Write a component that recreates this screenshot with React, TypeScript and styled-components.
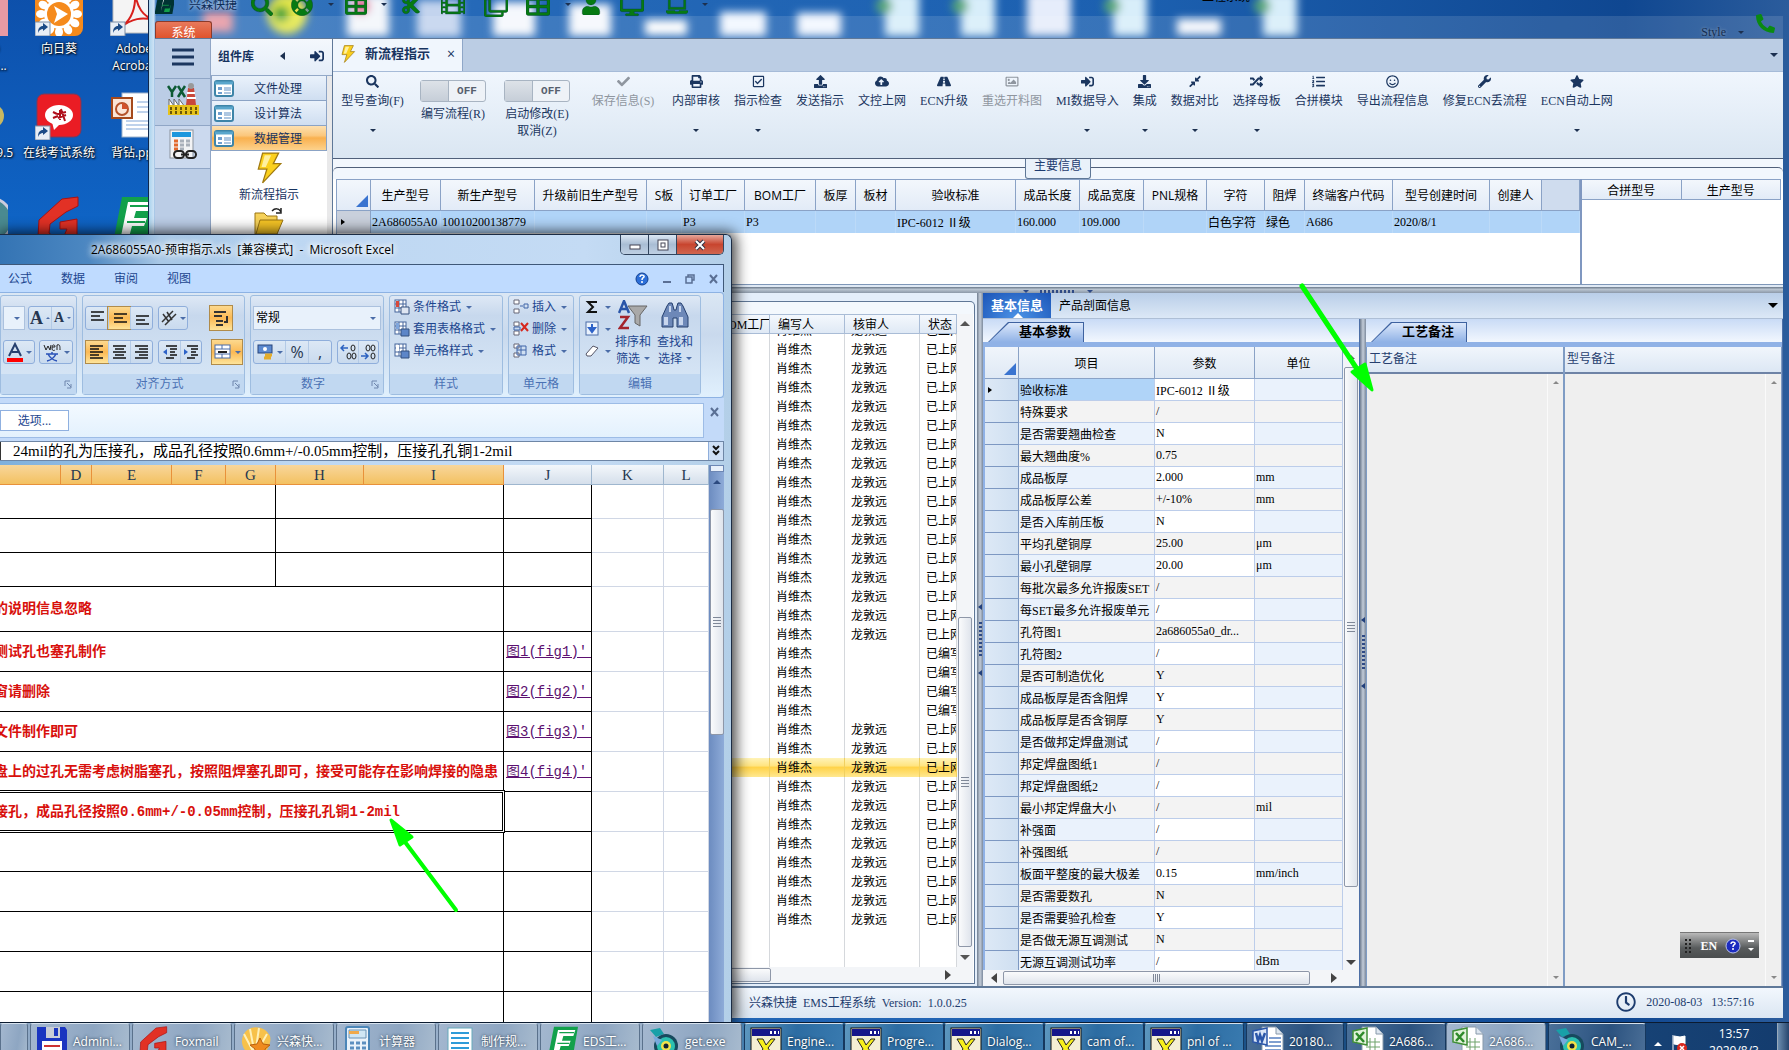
import React from 'react';
import styled, { createGlobalStyle, css } from 'styled-components';
import {
  FaSearch, FaCheck, FaPrint, FaRegCheckSquare, FaUpload, FaCloudUploadAlt, FaRoad, FaRegImage,
  FaSignInAlt, FaDownload, FaCompressAlt, FaRandom, FaListOl, FaRegSmile, FaWrench, FaStar,
  FaRegClock, FaPhoneAlt, FaCut, FaFilm, FaRegClone, FaTable, FaLifeRing, FaUser, FaDesktop, FaLaptop,
} from 'react-icons/fa';

const song = '"Liberation Serif", "Noto Sans CJK SC", serif';
const hei = '"Open Sans", "Noto Sans CJK SC", sans-serif';
const mono = '"Liberation Mono", "Noto Sans CJK SC", monospace';

const GlobalStyle = createGlobalStyle`
  * { box-sizing: border-box; }
  html, body { margin: 0; overflow: hidden; }
  body { font-family: ${song}; font-size: 12px; color: #000; }
  button, input, select, textarea { font: inherit; color: inherit; margin: 0; padding: 0; border: 0; background: none; border-radius: 0; }
  table { border-collapse: separate; border-spacing: 0; table-layout: fixed; }
  th, td { padding: 0; font-weight: normal; white-space: nowrap; overflow: hidden; }
  svg { display: block; flex: none; }
`;

/* ---------- shared pieces ---------- */
const Caret = styled.span<{ $size?: number; $dir?: 'up' | 'down' | 'left' | 'right'; $color?: string }>`
  display: block;
  flex: none;
  width: 0;
  height: 0;
  border: ${p => p.$size ?? 3}px solid transparent;
  ${p => {
    const c = p.$color ?? '#1c3050';
    const s = p.$size ?? 3;
    switch (p.$dir) {
      case 'up': return `border-bottom-color: ${c}; border-top-width: 0;`;
      case 'left': return `border-right-color: ${c}; border-right-width: ${s + 1}px; border-left-width: 0;`;
      case 'right': return `border-left-color: ${c}; border-left-width: ${s + 1}px; border-right-width: 0;`;
      default: return `border-top-color: ${c}; border-bottom-width: 0;`;
    }
  }}
`;

const VBar = styled.div`
  flex: 0 0 16px;
  display: flex;
  flex-direction: column;
  align-items: center;
  background: #f3f5f8;
`;
const VThumb = styled.div<{ $h: number; $gap: number }>`
  width: 14px;
  height: ${p => p.$h}px;
  margin-top: ${p => p.$gap}px;
  margin-bottom: auto;
  border: 1px solid #8e97a8;
  border-radius: 2px;
  background: repeating-linear-gradient(#7f8898 0 1px, transparent 1px 3px) center / 8px 10px no-repeat,
    linear-gradient(90deg, #fafbfc, #dfe4ec);
`;
const HBar = styled.div<{ $end?: number }>`
  flex: 0 0 16px;
  display: flex;
  align-items: center;
  padding: 0 ${p => p.$end ?? 8}px 0 8px;
  background: #f3f5f8;
`;
const HThumb = styled.div<{ $w: number }>`
  width: ${p => p.$w}px;
  height: 14px;
  margin: 0 auto 0 6px;
  border: 1px solid #8e97a8;
  border-radius: 2px;
  background: repeating-linear-gradient(90deg, #7f8898 0 1px, transparent 1px 2px) center / 8px 8px no-repeat,
    linear-gradient(#fafbfc, #dfe4ec);
`;
const Bar = styled.div<{ $pad: string }>`
  display: flex;
  flex: 1;
  flex-direction: column;
  align-items: center;
  padding: ${p => p.$pad};
`;

/* ---------- desktop ---------- */
const Desktop = styled.main`
  position: relative;
  height: 100vh;
  min-height: 700px;
  overflow: hidden;
  background: linear-gradient(90deg, #0f4fa8 0, #1c66bd 40%, #14509f 75%, #2a5c9c 100%);
`;
const DesktopIcons = styled.div`
  position: absolute;
  left: -53px;
  top: -62px;
  width: 230px;
  display: grid;
  grid-template-columns: 74px 76px 74px;
  grid-auto-rows: 104px;
  background: linear-gradient(#0d4ba4, #0f66c8);
`;
const DesktopIcon = styled.a`
  display: flex;
  flex-direction: column;
  align-items: center;
  padding-top: 50px;
  color: #fff;
  font: 12px/17px ${hei};
  text-align: center;
  text-decoration: none;
  text-shadow: 1px 1px 2px #000, 0 0 3px #012;
  white-space: pre;
  svg { margin-bottom: 4px; }
`;

const Shortcut = () => (
  <g>
    <rect x="0" y="34" width="15" height="14" fill="#e8eef6" stroke="#7d8ea6" />
    <path d="M3 45c0-5 2-7 5-7v-3l5 4-5 4v-2c-2 0-4 1-5 4z" fill="#1b4a86" />
  </g>
);

const SunIcon = () => (
  <svg width="48" height="48" viewBox="0 0 48 48">
    <rect width="48" height="48" rx="8" fill="#f58a1c" />
    {Array.from({ length: 12 }, (_, i) => (
      <ellipse key={i} cx="24" cy="8" rx="4" ry="5" fill="#fff" transform={`rotate(${i * 30} 24 26)`} />
    ))}
    <circle cx="24" cy="26" r="15" fill="#fff" />
    <circle cx="24" cy="26" r="12" fill="#f58a1c" />
    <path d="M19 18l14 8-14 9 3-9z" fill="#fff" />
    <Shortcut />
  </svg>
);
const AcrobatIcon = () => (
  <svg width="48" height="48" viewBox="0 0 48 48">
    <path d="M3 0h42v45H3z" fill="#f4f4f4" stroke="#bbb" />
    <path d="M10 40c12-8 16-22 15-36 2 16 8 24 19 28-12-3-22-2-34 8z" fill="none" stroke="#d8201c" strokeWidth="2" />
    <Shortcut />
  </svg>
);
const ExamIcon = () => (
  <svg width="48" height="48" viewBox="0 0 48 48">
    <rect x="2" y="2" width="44" height="43" rx="7" fill="#ea1c24" stroke="#7b3a5a" />
    <ellipse cx="24" cy="23" rx="14" ry="10" fill="#fff" />
    <path d="M17 30l2 8 6-6z" fill="#fff" />
    <path d="M18 20l4 2m-4 4l5-2m2-6v10m-3-6l9-2m-8 6l8-3m-5-6l4 12" stroke="#b0101c" strokeWidth="2" />
    <Shortcut />
  </svg>
);
const PptIcon = () => (
  <svg width="48" height="48" viewBox="0 0 48 48">
    <rect x="12" y="1" width="36" height="44" fill="#fff" stroke="#9fb4cc" />
    <path d="M27 10h18M27 15h18M27 20h18M16 29h28M16 33h28M16 37h28" stroke="#7fa5d8" />
    <rect x="2" y="6" width="20" height="20" fill="#fbe6d8" stroke="#a5491b" strokeWidth="2" />
    <circle cx="12" cy="17" r="6" fill="none" stroke="#b5532a" strokeWidth="2" />
    <path d="M12 17v-6a6 6 0 0 1 6 6z" fill="#d2512a" />
  </svg>
);
const RedG = ({ size = 48 }: { size?: number }) => (
  <svg width={size} height={size} viewBox="0 0 48 48">
    <path d="M43 1v9L31 16 15 28l-1 9 5 4 10-1 3-7h-7v-7l17-3v17l-9 8H10l-7-8 1-16L27 3z" fill="#e23125" stroke="#a11" />
  </svg>
);
const GreenF = ({ size = 48 }: { size?: number }) => (
  <svg width={size} height={size} viewBox="0 0 48 48">
    <path d="M12 1h36l-8 46H3z" fill="#12a04b" />
    <path d="M18 6h26l-3 9H26l-2 7h13l-3 8H22l-4 15h-8z" fill="#fff" />
    <path d="M20 10h22M17 26h18" stroke="#12a04b" strokeWidth="2" />
  </svg>
);

/* ---------- EMS window ---------- */
const EmsWindow = styled.section`
  position: absolute;
  left: 148px;
  right: 0;
  top: 0;
  bottom: 28px;
  display: flex;
  flex-direction: column;
  padding: 0 6px 4px;
  border-left: 1px solid #10284c;
  overflow: hidden;
  background: linear-gradient(90deg, #a9d3ee 0, #cfe3f5 5px, #3a78bd 7px, #2569b8 20%, #1c60b0 60%, #0f4791 90%, #2b5c9c 100%);
`;
const Glass = styled.header`
  position: relative;
  flex: 0 0 38px;
  overflow: hidden;
`;
const GlassBlur = styled.svg`
  position: absolute;
  inset: 0;
`;
const QuickRow = styled.div`
  position: relative;
  display: flex;
  align-items: center;
  height: 21px;
  padding-bottom: 12px;
  color: #067a12;
  svg { stroke: #033; stroke-width: 8px; }
`;
const QuickItem = styled.button<{ $w: number }>`
  flex: 0 0 ${p => p.$w}px;
  display: flex;
  justify-content: center;
`;
const Brand = styled.strong`
  flex: 0 0 68px;
  padding-left: 15px;
  color: #0d2c58;
  font: 12px/16px ${hei};
  white-space: nowrap;
  text-shadow: 0 0 4px #fff;
`;
const AppTitle = styled.span`
  margin: -17px auto 0 492px;
  color: #000;
  font-size: 12px;
`;
const SystemRow = styled.div`
  position: relative;
  display: flex;
  justify-content: space-between;
  height: 17px;
`;
const SystemTab = styled.button`
  width: 57px;
  height: 17px;
  padding-top: 3px;
  overflow: hidden;
  border: 1px solid #8c3a2a;
  border-bottom: 0;
  border-radius: 3px 3px 0 0;
  background: linear-gradient(#e8795c, #e0532c);
  color: #fff;
  line-height: 17px;
`;
const StyleBox = styled.div`
  display: flex;
  align-items: center;
  gap: 12px;
  padding-top: 5px;
  color: #132c50;
  text-shadow: 0 0 3px #9ab;
`;
const Phone = styled.span`
  margin: -18px 8px 0 0;
  color: #0a8a12;
`;
const Body = styled.div`
  flex: 1;
  display: flex;
  min-height: 0;
  border-top: 1px solid #5f7898;
  background: #eef4fb;
`;
const Rail = styled.nav`
  flex: 0 0 56px;
  background: #bbcde6;
  border-right: 1px solid #90a6c6;
`;
const RailButton = styled.button<{ $h: number; $on?: boolean }>`
  display: flex;
  align-items: center;
  justify-content: center;
  width: 100%;
  height: ${p => p.$h}px;
  padding-bottom: 4px;
  border-bottom: 1px solid #90a6c6;
  background: ${p => (p.$on ? '#cbd9ee' : 'transparent')};
`;
const Library = styled.aside`
  flex: 0 0 122px;
  padding-right: 5px;
  border-right: 1px solid #5f7898;
  background: #e9e9ea;
`;
const LibraryHead = styled.div`
  display: flex;
  align-items: center;
  justify-content: space-between;
  height: 37px;
  padding: 0 8px 2px 7px;
  margin-right: -5px;
  background: linear-gradient(#f4f8fd, #e4edf8);
  border-bottom: 1px solid #93a9c8;
  color: #17335f;
  font-weight: bold;
`;
const LibraryGroup = styled.button<{ $active?: boolean }>`
  display: flex;
  align-items: center;
  width: 100%;
  height: 25px;
  padding-left: 2px;
  gap: 20px;
  border: 1px solid #8ba3c5;
  border-top: 0;
  color: #17335f;
  background: ${p => (p.$active
    ? 'linear-gradient(#fde0b0 0, #fbc77c 40%, #f9b04e 50%, #fdd28c 100%)'
    : 'linear-gradient(#eaf2fb, #cfdef1)')};
`;
const LibraryBody = styled.div`
  display: flex;
  flex-direction: column;
  align-items: center;
  height: 100%;
  padding-top: 1px;
  gap: 3px;
  color: #17335f;
  background: #fff;
  line-height: 17px;
`;
const Work = styled.div`
  flex: 1;
  min-width: 0;
  display: flex;
  flex-direction: column;
`;
const DocTabs = styled.div`
  flex: 0 0 32px;
  display: flex;
  align-items: center;
  justify-content: space-between;
  padding-right: 5px;
  background: #bbcde4;
  border-bottom: 1px solid #a6bbd8;
`;
const DocTab = styled.div`
  display: flex;
  align-items: center;
  width: 130px;
  height: 32px;
  padding: 0 7px 2px 6px;
  gap: 8px;
  background: #f0f6fd;
  border-right: 1px solid #8fa7c8;
  color: #17335f;
  font: bold 13px/20px ${song};
  button { margin-left: auto; font: 14px/14px ${hei}; }
`;
const Toolbar = styled.div`
  flex: 0 0 87px;
  display: flex;
  align-items: flex-start;
  gap: 14px;
  padding-left: 6px;
  overflow: hidden;
  background: linear-gradient(#f0f6fd, #dae6f2);
  border-bottom: 1px solid #50607a;
`;
const Tool = styled.button<{ $w: number }>`
  flex: 0 0 ${p => p.$w}px;
  display: flex;
  flex-direction: column;
  align-items: center;
  padding-top: 3px;
  color: #1b365f;
  line-height: 18px;
  white-space: nowrap;
  &:disabled { color: #8f969f; }
  svg { height: 13px; margin-bottom: 4px; }
  > span:last-child:not(:nth-child(2)) { margin-top: 19px; }
`;
const SwitchTool = styled.label<{ $w: number }>`
  flex: 0 0 ${p => p.$w}px;
  display: flex;
  flex-direction: column;
  align-items: center;
  padding-top: 8px;
  color: #1b365f;
  line-height: 17px;
  text-align: center;
  white-space: pre;
  input { position: absolute; opacity: 0; }
`;
const SwitchBox = styled.span`
  display: flex;
  width: 66px;
  height: 22px;
  margin-bottom: 4px;
  border: 1px solid #a8b4c2;
  border-radius: 3px;
  background: #eef2f7;
  color: #57606e;
  font: bold 11px/20px ${mono};
  &::before { content: ''; width: 27px; background: linear-gradient(#dde2e8, #c6ced8); border-right: 1px solid #a8b4c2; }
  span { flex: 1; }
`;
const LegendRow = styled.div`
  flex: 0 0 20px;
  display: flex;
  background: #f2f7fd;
`;
const LegendLine = styled.span<{ $side: 'left' | 'right' }>`
  flex: 1;
  margin-top: 8px;
  border-top: 1px solid #50607a;
  border-top-${p => p.$side}-radius: 5px;
`;
const LegendButton = styled.button`
  width: 66px;
  height: 20px;
  padding-bottom: 5px;
  border: 1px solid #5f7796;
  border-top: 0;
  border-radius: 0 0 3px 3px;
  background: #e9f1fa;
  color: #1e3c70;
  line-height: 14px;
`;
const InfoRow = styled.div`
  flex: 0 0 106px;
  display: flex;
  padding: 0 2px 0 3px;
  border-bottom: 1px solid #7f97b8;
  background: #fff;
`;
const InfoTable = styled.table<{ $head: number }>`
  width: 100%;
  th {
    height: ${p => p.$head}px;
    border: 1px solid #8aa2c6;
    border-width: 1px 1px 1px 0;
    background: linear-gradient(#f3f7fc, #e2ebf7);
    font-family: ${hei};
    text-align: center;
  }
  th.blank { background: #cfdcee; }
  td {
    height: 22px;
    padding-left: 1px;
    background: #b0d4f8;
    border-right: 1px solid #bcdaf8;
  }
  td.mark { background: #c9d0dc; border-right-color: #8aa2c6; padding-left: 4px; }
`;
const InfoLeft = styled.div`
  flex: 0 1 1244px;
  min-width: 0;
  border-left: 1px solid #8aa2c6;
`;
const InfoRight = styled.div`
  flex: 1 0 100px;
  border-left: 2px solid #7f97c0;
`;
const HSplit = styled.div`
  flex: 0 0 8px;
  display: flex;
  align-items: flex-end;
  justify-content: center;
  gap: 11px;
  border-top: 2px solid #dfe9f5;
  background: linear-gradient(#6b7889, #b9c4d0 40%, #8b98a8);
`;
const Dots = styled.i<{ $v?: boolean }>`
  width: ${p => (p.$v ? 3 : 36)}px;
  height: ${p => (p.$v ? 36 : 3)}px;
  background: repeating-linear-gradient(${p => (p.$v ? '180deg' : '90deg')}, #2e4a86 0 2px, transparent 2px 4px);
`;
const VSplit = styled.div`
  flex: 0 0 6px;
  display: flex;
  flex-direction: column;
  align-items: center;
  justify-content: center;
  gap: 12px;
  background: linear-gradient(90deg, #6f7d90, #c3ccd8, #7d8b9e);
`;
const Lower = styled.div`
  flex: 1;
  display: flex;
  min-height: 0;
`;

/* review list */
const ReviewPane = styled.div`
  flex: 0 0 644px;
  display: flex;
  padding: 8px 2px 2px 4px;
  background: #e4eefa;
`;
const ReviewBox = styled.div`
  flex: 1;
  display: flex;
  flex-direction: column;
  min-width: 0;
  padding: 12px 1px 0 0;
  border: 1px solid #5f7796;
  border-left: 0;
  border-top-right-radius: 5px;
  background: linear-gradient(#f3f8fd 0 12px, #fff 12px);
`;
const ReviewMain = styled.div`
  flex: 1;
  display: flex;
  min-height: 0;
`;
const ReviewLists = styled.div`
  flex: 1;
  min-width: 0;
  overflow: hidden;
  display: flex;
  flex-direction: column;
`;
const ReviewTable = styled.table`
  width: 100%;
  th { height: 18px; padding-left: 8px; text-align: left; border: 1px solid #a9bcd6; border-width: 1px 1px 1px 0; background: linear-gradient(#f4f8fd, #dfe9f5); }
  td { height: 19px; padding-left: 6px; border-right: 1px solid #d5d8dc; font-size: 12px; line-height: 18px; text-overflow: clip; }
  tr.current td {
    background: linear-gradient(#fff3b8 0, #ffe582 40%, #ffd34a 50%, #ffe890 100%);
    border-color: #f0d060;
  }
`;
const ReviewScroll = styled.div`
  flex: 1;
  overflow: hidden;
  table { margin-top: -13px; }
`;

/* details */
const Details = styled.div`
  flex: 1;
  min-width: 0;
  display: flex;
  flex-direction: column;
`;
const DetailTabs = styled.div`
  flex: 0 0 25px;
  display: flex;
  align-items: center;
  padding-right: 5px;
  background: linear-gradient(#b9cee8, #dce8f6);
  border-bottom: 1px solid #aebfd6;
`;
const DetailTab = styled.button<{ $on?: boolean }>`
  height: 25px;
  padding: 0 8px 2px;
  white-space: nowrap;
  ${p => p.$on && css`
    position: relative;
    background: radial-gradient(ellipse at bottom, #4c93e6, #1b55b8);
    color: #fff;
    font-weight: bold;
    font-size: 13px;
    &::after { content: ''; position: absolute; left: 30px; bottom: 0; border: 5px solid transparent; border-bottom-color: #fff; border-top: 0; }
  `}
`;
const Spring = styled.span`flex: 1;`;
const DetailBody = styled.div`
  flex: 1;
  display: flex;
  min-height: 0;
`;
const Panel = styled.div<{ $w?: number }>`
  flex: ${p => (p.$w ? `0 0 ${p.$w}px` : '1')};
  min-width: 0;
  display: flex;
  flex-direction: column;
  border-right: 1px solid #4d6fa6;
`;
const SlantRow = styled.div`
  flex: 0 0 28px;
  display: flex;
  align-items: flex-end;
  padding-left: 5px;
  border-bottom: 5px solid #90b2e6;
  background: linear-gradient(#c9dbf6, #f2f7fe);
`;
const SlantTab = styled.button`
  position: relative;
  isolation: isolate;
  width: 96px;
  height: 20px;
  padding-left: 18px;
  background: #3e62a0;
  clip-path: polygon(0 100%, 20px 0, 100% 0, 100% 100%);
  font-size: 13px;
  font-weight: bold;
  line-height: 18px;
  &::before {
    content: '';
    position: absolute;
    inset: 1px 1px 0 1px;
    z-index: -1;
    background: linear-gradient(#dce8fb, #90b2e6);
    clip-path: polygon(0 100%, 20px 0, 100% 0, 100% 100%);
  }
`;
const ParamArea = styled.div`
  flex: 1;
  display: flex;
  min-height: 0;
  padding-left: 2px;
  background: #90b2e6;
`;
const ParamClip = styled.div`
  flex: 1;
  overflow: hidden;
  background: #fff;
`;
const ParamTable = styled.table`
  width: 100%;
  th { height: 32px; border: 1px solid #8aa2c6; border-width: 0 1px 1px 0; background: linear-gradient(#f0f5fb, #dfe9f5); font-family: ${hei}; text-align: center; }
  td { height: 22px; padding-left: 1px; border: 1px solid #bccdea; border-width: 0 1px 1px 0; background: #eaf2fc; }
  td.value { background: #fff; }
  tr:nth-child(even) td { background: #f3f3f3; }
  tr td:first-child, tr:nth-child(even) td:first-child { background: linear-gradient(90deg, #dde9f6, #cfdff1); border-color: #7d98c2; padding-left: 3px; }
  tr.current td:nth-child(2) { background: #b0d4f8; }
`;
const Corner = styled.svg`
  margin: 12px 2px 0 auto;
`;
const Notes = styled.div`
  flex: 1;
  display: grid;
  grid-template-columns: 198px 1fr;
  min-height: 0;
`;
const Note = styled.label`
  display: flex;
  flex-direction: column;
  border-right: 1px solid #7f9cc4;
  border-left: 1px solid #7f9cc4;
  color: #26406f;
  > span:first-child { flex: 0 0 27px; padding: 4px 2px; border-bottom: 2px solid #6e83a6; background: linear-gradient(#f1f6fc, #dce7f4); line-height: 17px; }
`;
const NoteField = styled.span`
  flex: 1;
  display: flex;
  background: #efefef;
  textarea { flex: 1; min-width: 0; resize: none; outline: 0; overflow: hidden; }
`;
const NoteBar = styled.span`
  flex: 0 0 16px;
  display: flex;
  flex-direction: column;
  align-items: center;
  justify-content: space-between;
  padding: 7px 0;
  border-left: 1px solid #fafafa;
`;
const StatusBar = styled.footer`
  flex: 0 0 32px;
  display: flex;
  align-items: center;
  gap: 10px;
  padding: 0 29px 2px 594px;
  border-top: 2px solid #5f7898;
  background: linear-gradient(#f2f7fd, #dbe6f2);
  color: #1d3c6e;
  white-space: pre;
  > span:first-child { margin-right: auto; }
`;

/* ---------- Excel window ---------- */
const ExcelWindow = styled.section`
  position: absolute;
  left: 0;
  top: 234px;
  bottom: 28px;
  width: 732px;
  display: flex;
  flex-direction: column;
  padding-right: 7px;
  border-top: 1px solid #1c2c44;
  border-right: 1px solid #1c2c44;
  border-radius: 0 6px 0 0;
  background: linear-gradient(90deg, #7fb0dc 0, #bdd7f2 40%, #c4dbf4 80%, #b3cfe8 100%);
  box-shadow: 2px 0 14px 2px rgba(0, 0, 0, 0.75);
  font: 12px/16px ${hei};
  color: #1d468f;
`;
const TitleBar = styled.header`
  flex: 0 0 29px;
  display: flex;
  align-items: center;
  padding-left: 91px;
  background: linear-gradient(90deg, #3474b4 0, #4d88c2 90px, #a9c8e6 160px, transparent 250px);
  color: #000;
  white-space: pre;
  text-shadow: 0 0 6px #fff, 0 0 6px #fff, 0 0 10px #fff;
`;
const WinButtons = styled.div`
  align-self: flex-start;
  display: flex;
  height: 20px;
  margin-left: auto;
  border: 1px solid #33465f;
  border-top: 0;
  border-radius: 0 0 5px 5px;
  overflow: hidden;
`;
const WinButton = styled.button<{ $close?: boolean }>`
  display: flex;
  align-items: center;
  justify-content: center;
  width: ${p => (p.$close ? 46 : 28)}px;
  border-right: ${p => (p.$close ? 0 : 1)}px solid #33465f;
  background: ${p => (p.$close ? 'linear-gradient(#e6a79b, #c8452f 50%, #d0664f)' : 'linear-gradient(#dbe7f3, #a9bdd4 50%, #bfd0e3)')};
`;
const MenuRow = styled.nav`
  flex: 0 0 28px;
  display: flex;
  align-items: center;
  gap: 29px;
  padding-left: 8px;
  border-top: 1px solid #3f5878;
  border-right: 1px solid #3f5878;
  background: #bfdbff;
`;
const MdiButtons = styled.div`
  display: flex;
  align-items: center;
  gap: 14px;
  margin-left: auto;
  padding-right: 5px;
  color: #5a6f94;
`;
const RibbonStrip = styled.div`
  flex: 0 0 106px;
  display: flex;
  gap: 5px;
  padding: 2px 0;
  border: 1px solid #8db2e3;
  border-left: 0;
  border-radius: 0 4px 4px 0;
  background: linear-gradient(#dbe7f4, #c9d9ed 40%, #e0f0fd);
`;
const Group = styled.fieldset<{ $w: number }>`
  flex: 0 0 ${p => p.$w}px;
  display: flex;
  flex-direction: column;
  min-width: 0;
  margin: 0;
  padding: 0;
  border: 1px solid #9ebde0;
  border-radius: 3px;
  background: linear-gradient(#dee8f5, #c7d8ed 20%, #d9e8f7);
`;
const GroupBody = styled.div<{ $row?: boolean }>`
  flex: 1;
  display: flex;
  flex-direction: ${p => (p.$row ? 'row' : 'column')};
  padding: ${p => (p.$row ? '0 3px' : '10px 2px 0')};
  gap: ${p => (p.$row ? 2 : 10)}px;
`;
const GroupLabel = styled.div`
  flex: 0 0 20px;
  display: flex;
  align-items: center;
  justify-content: center;
  background: #c1d8f1;
  color: #4a71b4;
  padding: 0 4px;
  span { flex: 1; text-align: center; }
`;
const Line = styled.div<{ $gap?: number }>`
  display: flex;
  height: 24px;
  gap: ${p => p.$gap ?? 5}px;
`;
const Cluster = styled.div`
  display: flex;
  border: 1px solid #8faedb;
  border-radius: 3px;
  background: linear-gradient(#dce8f5, #c9daee);
`;
const IconButton = styled.button<{ $w: number; $on?: boolean }>`
  display: flex;
  align-items: center;
  justify-content: center;
  gap: 3px;
  width: ${p => p.$w}px;
  font-size: 16px;
  color: #26364f;
  white-space: nowrap;
  ${p => p.$on && css`background: linear-gradient(#fcd98f, #fbb954 50%, #fee49a); box-shadow: 0 0 0 1px #b08b4a;`}
  & + & { border-left: 1px solid #b3cae6; }
`;
const FontLetter = styled.b<{ $small?: boolean }>`
  font: bold ${p => (p.$small ? 14 : 18)}px/20px ${song};
`;
const Combo = styled.div<{ $w: number }>`
  display: flex;
  align-items: center;
  width: ${p => p.$w}px;
  padding-right: 4px;
  border: 1px solid #abc1de;
  background: #e8f1fb;
  color: #000;
  select { flex: 1; min-width: 0; height: 100%; appearance: none; padding-left: 2px; }
`;
const RibbonItem = styled.button`
  display: flex;
  align-items: center;
  gap: 3px;
  height: 22px;
  white-space: nowrap;
  span:last-child { margin-left: 2px; }
`;
const RibbonList = styled.div`
  padding-left: 1px;
`;
const BigButton = styled.button`
  display: flex;
  flex-direction: column;
  align-items: center;
  width: 40px;
  padding-top: 4px;
  line-height: 17px;
  white-space: nowrap;
  svg { margin-bottom: 3px; }
  em { display: flex; align-items: center; gap: 4px; font-style: normal; }
`;
const MessageRow = styled.div`
  flex: 0 0 43px;
  display: flex;
  gap: 6px;
  padding: 5px 5px 3px 0;
  background: #c3daf9;
  color: #6079a4;
  > div { flex: 1; display: flex; align-items: center; border: 1px solid #9dbce6; border-left: 0; background: linear-gradient(#f3f9ff, #e3f1fd); }
  > div button { width: 69px; height: 21px; border: 1px solid #8fb0e0; background: #fff; color: #1d468f; }
  > button { align-self: flex-start; padding-top: 4px; font-size: 14px; }
`;
const FormulaRow = styled.div`
  flex: 0 0 20px;
  display: flex;
  border: 1px solid #6e86a6;
  border-left: 0;
  background: #fff;
  input { flex: 1; padding-left: 12px; color: #000; font: 15px/18px ${song}; outline: 0; border-left: 1px solid #333; }
  button { width: 15px; background: #cfe0f6; border-left: 1px solid #8faedb; font-size: 10px; }
`;
const SheetArea = styled.div`
  flex: 1;
  display: flex;
  min-height: 0;
  margin-top: 4px;
  overflow: hidden;
  background: #fff;
`;
const SheetClip = styled.div`
  flex: 1;
  overflow: hidden;
`;
const Sheet = styled.table`
  width: 709px;
  font-family: ${mono};
  color: #000;
  th { height: 20px; border-right: 1px solid #9eb6ce; border-bottom: 1px solid #9eb6ce; background: linear-gradient(#f3f7fb, #d5dfeb); font: 15px/18px ${song}; text-align: center; color: #26384f; }
  th.sel { background: linear-gradient(#f8d69b, #f3c161); border-right-color: #e8913a; border-bottom-color: #e8913a; }
  td { border-right: 1px solid #000; border-bottom: 1px solid #000; font-size: 14px; }
  td.free { border-color: #d0d7e5; }
  td.note { color: #d8100c; font-weight: bold; text-indent: -6px; }
  td.active { position: relative; overflow: visible; }
  td.active::after {
    content: '';
    position: absolute;
    inset: -2px -2px -2px -6px;
    border: 1px solid #000;
    box-shadow: inset 0 0 0 1px #fff, inset 0 0 0 2px #000;
  }
  a { padding-left: 2px; color: #5c1070; white-space: pre; }
`;
const Row = styled.tr<{ $h: number }>`
  height: ${p => p.$h}px;
`;
const SheetBar = styled.div`
  flex: 0 0 15px;
  background: linear-gradient(90deg, #6c8cc0, #8eabd8);
  display: flex;
  flex-direction: column;
  align-items: center;
`;
const SheetSplit = styled.i`
  width: 14px;
  height: 7px;
  margin-bottom: 8px;
  border: 1px solid #6d87b4;
  background: #e8f0fa;
`;

/* ---------- overlay and taskbar ---------- */
const Pointers = styled.svg`
  position: absolute;
  inset: 0;
  pointer-events: none;
`;
const LangBar = styled.div`
  position: absolute;
  right: 30px;
  bottom: 92px;
  display: flex;
  align-items: center;
  justify-content: space-between;
  width: 79px;
  height: 26px;
  padding: 0 5px 0 4px;
  border-top: 1px solid #777;
  background: linear-gradient(#b9b9b9, #585b5c 60%, #4a4d4e);
  color: #fff;
  font: bold 12px/16px ${song};
  > i { width: 9px; height: 16px; background: radial-gradient(circle, #222 1px, transparent 1px) 0 0 / 4px 4px; }
`;
const LangMenu = styled.button`
  display: flex;
  flex-direction: column;
  align-items: center;
  gap: 6px;
  &::before { content: ''; width: 6px; height: 2px; background: #fff; }
`;
const TaskBar = styled.footer`
  position: absolute;
  left: 0;
  right: 0;
  bottom: 0;
  height: 28px;
  display: flex;
  border-top: 1px solid #0b1b30;
  overflow: hidden;
  background: linear-gradient(90deg, #8fa9c6 0, #9db3cc 40%, #2b6da3 42%, #1c5288 70%, #143c6e 100%);
`;
const Task = styled.button<{ $w: number; $tone: 'light' | 'blue' | 'dark'; $joined?: boolean }>`
  flex: 0 0 ${p => p.$w}px;
  display: flex;
  align-items: center;
  gap: 5px;
  height: 44px;
  margin-left: ${p => (p.$joined ? 0 : 2)}px;
  padding: 0 0 6px 5px;
  overflow: hidden;
  border: 1px solid ${p => (p.$tone === 'light' ? '#5a718c' : '#16385e')};
  border-top-color: #d6e2ee;
  border-radius: 3px;
  background: ${p => ({
    light: 'linear-gradient(100deg, #a3b7cf, #8ea6c2 60%, #a9bccf)',
    blue: 'linear-gradient(100deg, #5d97bf, #2c6ca2 50%, #3a7bb0)',
    dark: 'linear-gradient(100deg, #4a7099, #2b527f 60%, #4c7098)',
  }[p.$tone])};
  color: #fff;
  font: 12px/16px ${hei};
  text-shadow: 0 0 3px #123;
  white-space: nowrap;
`;
const Tray = styled.div`
  display: flex;
  gap: 9px;
  margin-left: auto;
  padding-top: 2px;
  color: #fff;
  font: 12px/17px ${hei};
  text-align: center;
  > span:first-child { margin-top: 17px; }
  > svg { margin-top: 9px; }
  time { display: block; width: 68px; margin-left: 4px; }
  > i { width: 12px; height: 30px; margin-top: -2px; border-left: 1px solid #9ab; background: linear-gradient(90deg, #6b8cae, #27466e); }
`;

/* ---------- drawings ---------- */
const Bolt = ({ size }: { size: number }) => (
  <svg width={size} height={size} viewBox="0 0 30 30">
    <path d="M9 1h15l-5 10h7L9 29l4-13H5z" fill="#fbd01e" stroke="#a07a12" strokeWidth="1.2" />
    <path d="M11 3h6L12 14H8z" fill="#fff0a0" />
  </svg>
);
const FormIcon = () => (
  <svg width="20" height="17" viewBox="0 0 20 17">
    <rect x="1" y="1" width="18" height="15" rx="2" fill="#fff" stroke="#3d84a8" strokeWidth="2" />
    <path d="M1 3h18" stroke="#5aa6cc" strokeWidth="3" />
    <path d="M4 7h4v3H4zM4 12h4v2H4z" fill="#6f9fd0" />
    <path d="M10 8h7M10 10h7M10 13h7" stroke="#5e8fc4" />
  </svg>
);
const FactoryIcon = () => (
  <svg width="32" height="34" viewBox="0 0 32 34">
    <path d="M1 3l4 6v5M9 3L5 9M11 3l7 11M18 3l-7 11" stroke="#0c5a34" strokeWidth="2.5" fill="none" />
    <path d="M21 5h6l2 17H19z" fill="#c8483c" />
    <path d="M20 10h8M20 15h9" stroke="#fff" strokeWidth="2" />
    <circle cx="24" cy="3" r="3" fill="#999" />
    <path d="M2 24v-8l5 7v-7l5 7v-7l6 8z" fill="#fff" stroke="#666" />
    <path d="M1 22h31v10H1z" fill="#e6c21a" />
    <path d="M4 24v3M9 24v3M14 24v3M19 24v3M24 24v3M29 24v3M4 28v3M9 28v3M14 28v3M19 28v3M24 28v3M29 28v3" stroke="#6a5608" strokeWidth="2" />
  </svg>
);
const CalcIcon = () => (
  <svg width="30" height="32" viewBox="0 0 30 32">
    <rect x="2" y="1" width="23" height="28" fill="#f2f3f5" stroke="#8c949e" />
    <rect x="4" y="3" width="19" height="5" fill="#1d97dd" />
    <path d="M6 12h4M6 16h4M6 20h4" stroke="#e2682c" strokeWidth="3" />
    <path d="M12 12h4M18 12h4M12 16h4M18 16h4M12 20h4" stroke="#a9b0ba" strokeWidth="3" />
    <rect x="6" y="22" width="10" height="7" rx="3.5" fill="none" stroke="#222" strokeWidth="2" />
    <rect x="18" y="22" width="10" height="7" rx="3.5" fill="none" stroke="#222" strokeWidth="2" />
    <path d="M13 25.500h8" stroke="#222" strokeWidth="2" />
  </svg>
);
const FolderIcon = () => (
  <svg width="32" height="30" viewBox="0 0 32 30">
    <path d="M2 6h9l3 3h10v18H2z" fill="#f6d25a" stroke="#9a7412" />
    <path d="M7 13h23l-6 14H3z" fill="#f5c425" stroke="#9a7412" />
    <path d="M19 4c3-3 7-3 9 1m0-4v5h-5" fill="none" stroke="#222" strokeWidth="1.500" />
  </svg>
);
const AlignIcon = ({ rows, x = 2, step = 2 }: { rows: number[]; x?: number; step?: number }) => (
  <svg width="16" height="16" viewBox="0 0 16 16">
    <path d={rows.map((y, i) => `M${x + (i % 2 ? step : 0)} ${y}h${i % 2 ? 9 : 13}`).join('')} stroke="#111" strokeWidth="1.5" />
  </svg>
);
const IndentIcon = ({ out }: { out?: boolean }) => (
  <svg width="16" height="16" viewBox="0 0 16 16">
    <path d="M4 2h11M8 5h7M8 8h5M8 11h7M4 14h8" stroke="#111" strokeWidth="1.5" />
    <path d={out ? 'M5 5v6L1 8z' : 'M1 5v6l4-3z'} fill="#2d62c8" />
  </svg>
);
const SmallGrid = ({ a, b }: { a: string; b: string }) => (
  <svg width="16" height="16" viewBox="0 0 16 16">
    <rect x="1" y="1" width="11" height="12" fill="#fff" stroke="#44659b" />
    <path d="M1 5h11M1 9h11M5 1v12M9 1v12" stroke="#44659b" />
    <path d="M2 2h3v6H2z" fill={a} />
    <path d="M7 8h8v7H7z" fill={b} stroke="#34507f" />
  </svg>
);
const Launcher = () => (
  <svg width="8" height="9" viewBox="0 0 8 9">
    <path d="M1 6V1h5M3 3l4 4M7 4v4H3" fill="none" stroke="#6e86ad" />
  </svg>
);
const SortIcon = () => (
  <svg width="30" height="30" viewBox="0 0 30 30">
    <path d="M1 13L6 1l5 12M3 9h6" fill="none" stroke="#2a55a8" strokeWidth="2.5" />
    <path d="M2 17h8L2 28h9" fill="none" stroke="#a4242c" strokeWidth="2.5" />
    <path d="M10 6h19l-7 9v11l-5-3v-8z" fill="#a9a9a9" stroke="#666" />
  </svg>
);
const BinocularIcon = () => (
  <svg width="30" height="30" viewBox="0 0 30 30">
    <path d="M7 6l2-3h3l1 3 1 4h2l1-4 1-3h3l2 3 5 11v10H17v-9h-4v9H2V17z" fill="#6d88b8" stroke="#26406f" />
    <path d="M4 17h4v8H4zM19 17h4v8h-4zM9 6h2v6H9zM19 6h2v6h-2z" fill="#c8d6ee" />
  </svg>
);
const TaskIcon = ({ kind }: { kind: string }) => {
  if (kind === 'g') return <RedG size={32} />;
  if (kind === 'f') return <GreenF size={32} />;
  return (
    <svg width="32" height="32" viewBox="0 0 32 32">
      {kind === 'disk' && <g><path d="M1 1h28l2 3v26H1z" fill="#1a35c0" /><path d="M10 1h14v11H10z" fill="#c9cdd6" /><path d="M18 2h4v8h-4z" fill="#1a35c0" /><path d="M6 15h20v15H6z" fill="#fff" /><path d="M8 20h16M8 25h16" stroke="#c33" strokeWidth="2" /></g>}
      {kind === 'shell' && <g><path d="M16 30C2 28-2 14 6 5c7-7 20-4 24 5 2 8-4 20-14 20z" fill="#f7c14a" /><path d="M15 29L4 8M15 29L10 3M15 29L19 2M15 29L27 8" stroke="#fff0b8" strokeWidth="2" /><path d="M20 12l3 6 7 1-5 4 1 7-6-3-6 3 1-7-5-4 7-1z" fill="#ef8a1e" stroke="#b8600c" /></g>}
      {kind === 'calc' && <g><rect x="4" y="1" width="23" height="31" rx="2" fill="#e9f2fa" stroke="#4b86b8" strokeWidth="2" /><path d="M7 4h17v8H7z" fill="#cfe6f4" stroke="#6a93b5" /><path d="M7 5h10v3H7z" fill="#f0a94a" /><path d="M8 17h16M8 22h16M8 27h16" stroke="#5b8fc0" strokeWidth="3" strokeDasharray="4 2" /></g>}
      {kind === 'note' && <g><rect x="4" y="2" width="24" height="30" fill="#fff" stroke="#6ab" /><path d="M7 7h18M7 12h18M7 17h18M7 22h18M7 27h18" stroke="#2f9bd8" strokeWidth="2" /></g>}
      {kind === 'eye' && <g><path d="M2 4l10-2 4 6-8 3z" fill="#18a0a8" /><circle cx="18" cy="20" r="12" fill="#174a5e" /><circle cx="18" cy="20" r="9" fill="#2cc0b0" /><circle cx="18" cy="20" r="5" fill="#f2e24a" /><circle cx="18" cy="20" r="2.5" fill="#123" /><path d="M5 10l9 4-5 6z" fill="#7ad" /></g>}
      {kind === 'x' && <g><rect x="1" y="2" width="30" height="30" fill="#f4efd4" stroke="#111" /><rect x="2" y="3" width="28" height="7" fill="#16168a" /><path d="M20 5h2v3h-2zM24 5h2v3h-2zM28 5h1v3h-1z" fill="#fff" /><path d="M7 13h6l3 6 5-6h4l-7 9 7 10h-6l-4-7-5 7H6l7-9z" fill="#f6ee1c" stroke="#222" /></g>}
      {(kind === 'word' || kind === 'xls') && <g><path d="M10 1h14l7 7v24H10z" fill="#fff" stroke="#89a" /><path d="M24 1v7h7" fill="#dde6ef" stroke="#89a" />{kind === 'word' ? <path d="M17 12h12M17 16h12M13 20h16M13 24h16M13 28h16" stroke="#7f9fd0" strokeWidth="2" /> : <path d="M14 16h14M14 21h14M14 26h14M18 12v18M23 12v18" stroke="#6fa36a" />}<path d="M1 5l14-3v17L1 16z" fill={kind === 'word' ? '#dbe6f7' : '#e1f2da'} stroke={kind === 'word' ? '#2b56a8' : '#3f8f36'} strokeWidth="1.5" /><path d={kind === 'word' ? 'M4 7l2 8 2-6 2 6 3-8' : 'M4 7l8 9M12 6L4 15'} fill="none" stroke={kind === 'word' ? '#2b56a8' : '#2e8a2a'} strokeWidth="2.5" /></g>}
    </svg>
  );
};

/* ---------- data ---------- */
type ToolDef = { w: number; label: string; icon?: React.ReactNode; arrow?: boolean; off?: boolean };
const searchTool: ToolDef = { w: 67, label: '型号查询(F)', icon: <FaSearch size={13} />, arrow: true };
const tools: ToolDef[] = [
  { w: 70, label: '保存信息(S)', icon: <FaCheck size={13} />, off: true },
  { w: 48, label: '内部审核', icon: <FaPrint size={13} />, arrow: true },
  { w: 48, label: '指示检查', icon: <FaRegCheckSquare size={13} />, arrow: true },
  { w: 48, label: '发送指示', icon: <FaUpload size={13} /> },
  { w: 48, label: '文控上网', icon: <FaCloudUploadAlt size={14} /> },
  { w: 48, label: 'ECN升级', icon: <FaRoad size={14} /> },
  { w: 60, label: '重选开料图', icon: <FaRegImage size={14} />, off: true },
  { w: 60, label: 'MI数据导入', icon: <FaSignInAlt size={13} />, arrow: true },
  { w: 24, label: '集成', icon: <FaDownload size={13} />, arrow: true },
  { w: 48, label: '数据对比', icon: <FaCompressAlt size={12} />, arrow: true },
  { w: 48, label: '选择母板', icon: <FaRandom size={13} />, arrow: true },
  { w: 48, label: '合拼模块', icon: <FaListOl size={13} /> },
  { w: 72, label: '导出流程信息', icon: <FaRegSmile size={13} /> },
  { w: 82, label: '修复ECN丢流程', icon: <FaWrench size={13} /> },
  { w: 68, label: 'ECN自动上网', icon: <FaStar size={14} />, arrow: true },
];

const infoCols: [string, number, string][] = [
  ['生产型号', 70, '2A686055A0'], ['新生产型号', 94, '10010200138779'], ['升级前旧生产型号', 112, ''], ['S板', 35, ''],
  ['订单工厂', 63, 'P3'], ['BOM工厂', 71, 'P3'], ['板厚', 40, ''], ['板材', 40, ''], ['验收标准', 120, 'IPC-6012 Ⅱ级'],
  ['成品长度', 64, '160.000'], ['成品宽度', 64, '109.000'], ['PNL规格', 63, ''], ['字符', 58, '白色字符'], ['阻焊', 40, '绿色'],
  ['终端客户代码', 88, 'A686'], ['型号创建时间', 97, '2020/8/1'], ['创建人', 52, ''],
];

const params: [string, string, string][] = [
  ['验收标准', 'IPC-6012 Ⅱ级', ''], ['特殊要求', '/', ''], ['是否需要翘曲检查', 'N', ''], ['最大翘曲度%', '0.75', ''],
  ['成品板厚', '2.000', 'mm'], ['成品板厚公差', '+/-10%', 'mm'], ['是否入库前压板', 'N', ''], ['平均孔壁铜厚', '25.00', 'μm'],
  ['最小孔壁铜厚', '20.00', 'μm'], ['每批次最多允许报废SET', '/', ''], ['每SET最多允许报废单元', '/', ''],
  ['孔符图1', '2a686055a0_dr...', ''], ['孔符图2', '/', ''], ['是否可制造优化', 'Y', ''], ['成品板厚是否含阻焊', 'Y', ''],
  ['成品板厚是否含铜厚', 'Y', ''], ['是否做邦定焊盘测试', '/', ''], ['邦定焊盘图纸1', '/', ''], ['邦定焊盘图纸2', '/', ''],
  ['最小邦定焊盘大小', '/', 'mil'], ['补强面', '/', ''], ['补强图纸', '/', ''], ['板面平整度的最大极差', '0.15', 'mm/inch'],
  ['是否需要数孔', 'N', ''], ['是否需要验孔检查', 'Y', ''], ['是否做无源互调测试', 'N', ''], ['无源互调测试功率', '/', 'dBm'],
];

const reviews = Array.from({ length: 32 }, (_, i) => (i >= 17 && i <= 20 ? ['', '已编写'] : ['龙敦远', '已上网']));

const sheetCols: [string, number][] = [['', 61], ['D', 31], ['E', 80], ['F', 54], ['G', 50], ['H', 88], ['I', 140], ['J', 88], ['K', 72], ['L', 45]];
const sheetNotes: [number, string, string][] = [
  [45, '的说明信息忽略', ''], [40, '测试孔也塞孔制作', "图1(fig1)' "], [40, '窗请删除', "图2(fig2)' "], [40, '文件制作即可', "图3(fig3)' "],
  [40, '盘上的过孔无需考虑树脂塞孔，按照阻焊塞孔即可，接受可能存在影响焊接的隐患', "图4(fig4)' "],
  [40, '接孔，成品孔径按照0.6mm+/-0.05mm控制，压接孔孔铜1-2mil', ''],
  [40, '', ''], [40, '', ''], [40, '', ''], [40, '', ''], [40, '', ''],
];

const tasks: [string, string, number, 'light' | 'blue' | 'dark', boolean][] = [
  ['', '', 28, 'light', true], ['disk', 'Admini...', 100, 'light', false], ['g', 'Foxmail', 100, 'light', false], ['shell', '兴森快...', 100, 'light', false],
  ['calc', '计算器', 100, 'light', false], ['note', '制作规...', 100, 'light', false], ['f', 'EDS工...', 100, 'light', false], ['eye', 'get.exe', 100, 'light', false],
  ['x', 'Engine...', 100, 'blue', false], ['x', 'Progre...', 100, 'blue', true], ['x', 'Dialog...', 100, 'blue', true], ['x', 'cam of...', 100, 'blue', true],
  ['x', 'pnl of ...', 100, 'blue', true], ['word', '20180...', 98, 'dark', false], ['xls', '2A686...', 100, 'dark', false], ['xls', '2A686...', 100, 'light', true],
  ['eye', 'CAM_...', 98, 'dark', false],
];

const ToolButton = ({ t }: { t: ToolDef }) => (
  <Tool $w={t.w} disabled={t.off}>
    {t.icon}
    <span>{t.label}</span>
    {t.arrow && <Caret />}
  </Tool>
);

const quick: [number, React.ReactNode][] = [
  [40, <FaSearch size={22} />], [40, <FaLifeRing size={22} />], [18, <Caret />], [32, <FaTable size={22} />], [24, <Caret />],
  [30, <FaCut size={20} />], [54, <FaFilm size={24} />], [32, <FaRegClone size={24} />], [52, <FaTable size={24} />], [8, <Caret />],
  [38, <FaUser size={20} />], [44, <FaDesktop size={24} />], [46, <FaLaptop size={22} />], [10, <Caret />],
];

function Ems() {
  return (
    <EmsWindow>
      <Glass>
        <GlassBlur width="100%" height="38">
          <defs><filter id="soft"><feGaussianBlur stdDeviation="4" /></filter></defs>
          <g filter="url(#soft)">
            <rect x="48" y="12" width="30" height="20" fill="#e79aa4" />
            <circle cx="132" cy="14" r="20" fill="#e6e848" />
            <circle cx="126" cy="14" r="8" fill="#35a043" />
            <rect x="192" y="-6" width="42" height="42" fill="#f3f6fb" />
            <circle cx="206" cy="6" r="8" fill="#e0387c" />
            <rect x="262" y="0" width="44" height="37" fill="#c3d4ee" />
            <rect x="338" y="2" width="42" height="34" fill="#f5f8fd" />
            <rect x="414" y="4" width="42" height="32" fill="#f5f8fd" />
            <rect x="490" y="20" width="42" height="15" fill="#fff" />
            <rect x="565" y="12" width="46" height="24" fill="#f2f7ff" />
            <rect x="642" y="13" width="44" height="23" fill="#f2f7ff" />
            {[730, 806, 958, 1108].map(x => (
              <g key={x}>
                <rect x={x} y="-8" width="34" height="44" fill="#d8eefa" />
                <circle cx={x - 1} cy="6" r="8" fill="#58a878" />
              </g>
            ))}
            <rect x="872" y="-8" width="44" height="44" fill="#e6edfb" />
            <rect x="1022" y="19" width="44" height="16" fill="#f5f8fd" />
          </g>
          <rect y="16" width="100%" height="22" fill="#fff" opacity="0.12" />
        </GlassBlur>
        <QuickRow>
          <GreenF size={19} />
          <Brand>兴森快捷</Brand>
          {quick.map(([w, node], i) => <QuickItem key={i} $w={w} aria-label={`快捷 ${i + 1}`}>{node}</QuickItem>)}
          <AppTitle>工程系统</AppTitle>
        </QuickRow>
        <SystemRow>
          <SystemTab>系统</SystemTab>
          <StyleBox><span>Style</span><Caret /><Phone><FaPhoneAlt size={19} /></Phone></StyleBox>
        </SystemRow>
      </Glass>
      <Body>
        <Rail>
          <RailButton $h={40} aria-label="菜单">
            <svg width="22" height="18" viewBox="0 0 22 18"><path d="M0 2h22M0 9h22M0 16h22" stroke="#1b365f" strokeWidth="3" /></svg>
          </RailButton>
          <RailButton $h={47} aria-label="工厂"><FactoryIcon /></RailButton>
          <RailButton $h={43} $on aria-label="计算"><CalcIcon /></RailButton>
        </Rail>
        <Library>
          <LibraryHead><span>组件库</span><Caret $dir="left" $size={4} /><FaSignInAlt size={14} /></LibraryHead>
          <LibraryGroup><FormIcon />文件处理</LibraryGroup>
          <LibraryGroup><FormIcon />设计算法</LibraryGroup>
          <LibraryGroup $active><FormIcon />数据管理</LibraryGroup>
          <LibraryBody><Bolt size={32} /><span>新流程指示</span><FolderIcon /></LibraryBody>
        </Library>
        <Work>
          <DocTabs>
            <DocTab><Bolt size={18} />新流程指示<button aria-label="关闭">×</button></DocTab>
            <Caret $size={4} />
          </DocTabs>
          <Toolbar>
            <ToolButton t={searchTool} />
            <SwitchTool $w={64}><input type="checkbox" /><SwitchBox><span>OFF</span></SwitchBox>编写流程(R)</SwitchTool>
            <SwitchTool $w={74}><input type="checkbox" /><SwitchBox><span>OFF</span></SwitchBox>{'启动修改(E)\n取消(Z)'}</SwitchTool>
            {tools.map(t => <ToolButton key={t.label} t={t} />)}
          </Toolbar>
          <LegendRow><LegendLine $side="left" /><LegendButton>主要信息</LegendButton><LegendLine $side="right" /></LegendRow>
          <InfoRow>
            <InfoLeft>
              <InfoTable $head={32}>
                <colgroup><col style={{ width: 34 }} />{infoCols.map(c => <col key={c[0]} style={{ width: c[1] }} />)}<col /></colgroup>
                <thead><tr>
                  <th><Corner width="12" height="12"><path d="M12 0v12H0z" fill="#3a74d0" /></Corner></th>
                  {infoCols.map(c => <th key={c[0]}>{c[0]}</th>)}
                  <th className="blank" />
                </tr></thead>
                <tbody><tr>
                  <td className="mark"><Caret $dir="right" $color="#000" /></td>
                  {infoCols.map(c => <td key={c[0]}>{c[2]}</td>)}
                  <td />
                </tr></tbody>
              </InfoTable>
            </InfoLeft>
            <InfoRight>
              <InfoTable $head={21}><thead><tr><th>合拼型号</th><th>生产型号</th></tr></thead></InfoTable>
            </InfoRight>
          </InfoRow>
          <HSplit><Caret $color="#2e4a86" /><Dots /><Caret $color="#2e4a86" /></HSplit>
          <Lower>
            <ReviewPane>
              <ReviewBox>
                <ReviewMain>
                  <ReviewLists>
                    <ReviewTable>
                      <colgroup><col /><col style={{ width: 58 }} /><col style={{ width: 75 }} /><col style={{ width: 75 }} /><col style={{ width: 37 }} /></colgroup>
                      <thead><tr><th /><th>BOM工厂</th><th>编写人</th><th>核审人</th><th>状态</th></tr></thead>
                    </ReviewTable>
                    <ReviewScroll>
                      <ReviewTable>
                        <colgroup><col /><col style={{ width: 58 }} /><col style={{ width: 75 }} /><col style={{ width: 75 }} /><col style={{ width: 37 }} /></colgroup>
                        <tbody>
                          {reviews.map((r, i) => (
                            <tr key={i} className={i === 23 ? 'current' : undefined}><td /><td /><td>肖维杰</td><td>{r[0]}</td><td>{r[1]}</td></tr>
                          ))}
                          <tr><td /><td /><td /><td /><td /></tr>
                          <tr><td /><td /><td /><td /><td /></tr>
                        </tbody>
                      </ReviewTable>
                    </ReviewScroll>
                  </ReviewLists>
                  <VBar>
                    <Bar $pad="7px 0"><Caret $dir="up" $size={5} $color="#555" /><VThumb $h={330} $gap={291} /><Caret $size={5} $color="#555" /></Bar>
                  </VBar>
                </ReviewMain>
                <HBar $end={22}><HThumb $w={420} /><Caret $dir="right" $size={5} $color="#444" /></HBar>
              </ReviewBox>
            </ReviewPane>
            <VSplit><Caret $dir="left" $color="#22407c" /><Dots $v /><Caret $dir="left" $color="#22407c" /></VSplit>
            <Details>
              <DetailTabs>
                <DetailTab $on>基本信息</DetailTab><DetailTab>产品剖面信息</DetailTab><Spring /><Caret $size={5} $color="#000" />
              </DetailTabs>
              <DetailBody>
                <Panel $w={377}>
                  <SlantRow><SlantTab>基本参数</SlantTab></SlantRow>
                  <ParamArea>
                    <ParamClip>
                      <ParamTable>
                        <colgroup><col style={{ width: 34 }} /><col style={{ width: 136 }} /><col style={{ width: 100 }} /><col /></colgroup>
                        <thead><tr>
                          <th><Corner width="12" height="12"><path d="M12 0v12H0z" fill="#3a74d0" /></Corner></th>
                          <th>项目</th><th>参数</th><th>单位</th>
                        </tr></thead>
                        <tbody>
                          {params.map((p, i) => (
                            <tr key={p[0]} className={i === 0 ? 'current' : undefined}>
                              <td>{i === 0 && <Caret $dir="right" $color="#000" />}</td>
                              <td>{p[0]}</td><td className="value">{p[1]}</td><td>{p[2]}</td>
                            </tr>
                          ))}
                        </tbody>
                      </ParamTable>
                    </ParamClip>
                    <VBar>
                      <Bar $pad="8px 0 5px"><Caret $dir="up" $size={4} $color="#555" /><VThumb $h={520} $gap={8} /><Caret $size={5} $color="#444" /></Bar>
                    </VBar>
                  </ParamArea>
                  <HBar $end={22}><Caret $dir="left" $size={5} $color="#444" /><HThumb $w={307} /><Caret $dir="right" $size={5} $color="#444" /></HBar>
                </Panel>
                <VSplit><Caret $dir="left" $color="#22407c" /><Dots $v /><Caret $dir="left" $color="#22407c" /></VSplit>
                <Panel>
                  <SlantRow><SlantTab>工艺备注</SlantTab></SlantRow>
                  <Notes>
                    {['工艺备注', '型号备注'].map(n => (
                      <Note key={n}>
                        <span>{n}</span>
                        <NoteField>
                          <textarea />
                          <NoteBar><Caret $dir="up" $color="#888" /><Caret $color="#888" /></NoteBar>
                        </NoteField>
                      </Note>
                    ))}
                  </Notes>
                </Panel>
              </DetailBody>
            </Details>
          </Lower>
        </Work>
      </Body>
      <StatusBar><span>兴森快捷  EMS工程系统  Version:  1.0.0.25</span><FaRegClock size={20} /><time>2020-08-03   13:57:16</time></StatusBar>
    </EmsWindow>
  );
}

function Excel() {
  const blue = '#4a6ca8';
  return (
    <ExcelWindow>
      <TitleBar>
        {'2A686055A0-预审指示.xls  [兼容模式]  -  Microsoft Excel'}
        <WinButtons>
          <WinButton aria-label="最小化"><svg width="12" height="12"><rect x="1" y="6" width="10" height="4" fill="#fff" stroke="#445" /></svg></WinButton>
          <WinButton aria-label="最大化"><svg width="12" height="12"><rect x="1" y="1" width="10" height="10" fill="#fff" stroke="#445" /><rect x="4" y="4" width="4" height="4" fill="none" stroke="#445" /></svg></WinButton>
          <WinButton $close aria-label="关闭"><svg width="12" height="12"><path d="M2 2l8 8M10 2l-8 8" stroke="#334" strokeWidth="4" /><path d="M2 2l8 8M10 2l-8 8" stroke="#fff" strokeWidth="2" /></svg></WinButton>
        </WinButtons>
      </TitleBar>
      <MenuRow>
        <button>公式</button><button>数据</button><button>审阅</button><button>视图</button>
        <MdiButtons>
          <svg width="14" height="14" viewBox="0 0 14 14"><circle cx="7" cy="7" r="6" fill="#2d6fd8" stroke="#13408f" /><path d="M5 5c0-3 5-2 4 0-1 1-2 1-2 3m0 1v2" fill="none" stroke="#fff" strokeWidth="1.5" /></svg>
          <svg width="8" height="10"><path d="M0 8h8" stroke="#5a6f94" strokeWidth="2" /></svg>
          <svg width="10" height="10"><path d="M3 3V1h6v5H7M1 3h6v6H1z" fill="none" stroke="#5a6f94" strokeWidth="1.5" /></svg>
          <svg width="9" height="10"><path d="M1 1l7 8M8 1L1 9" stroke="#5a6f94" strokeWidth="2" /></svg>
        </MdiButtons>
      </MenuRow>
      <RibbonStrip>
        <Group $w={77}>
          <GroupBody>
            <Line $gap={3}>
              <Combo $w={22}><select aria-label="字号" /><Caret $color={blue} /></Combo>
              <Cluster><IconButton $w={22}><FontLetter>A</FontLetter><Caret $dir="up" $size={2} $color={blue} /></IconButton><IconButton $w={22}><FontLetter $small>A</FontLetter><Caret $size={2} $color={blue} /></IconButton></Cluster>
            </Line>
            <Line $gap={4}>
              <Cluster><IconButton $w={30} aria-label="字体颜色"><svg width="16" height="20" viewBox="0 0 16 20"><path d="M2 14L8 2l6 12M5 10h7" fill="none" stroke="#26406f" strokeWidth="2" /><path d="M0 18h16" stroke="#f00" strokeWidth="4" /></svg><Caret $color={blue} /></IconButton></Cluster>
              <Cluster><IconButton $w={32} aria-label="拼音"><svg width="18" height="20" viewBox="0 0 18 20"><path d="M1 3l2 5 2-4 2 4 1-5M9 5h3c0-3-3-3-3 1s3 2 3 2M14 8V3c3-1 3 1 3 5" fill="none" stroke="#222" /><path d="M3 12h12M9 10v2M5 12c2 4 5 6 9 7M13 12c-2 4-5 6-9 7" fill="none" stroke="#2a52b8" strokeWidth="1.5" /></svg><Caret $color={blue} /></IconButton></Cluster>
            </Line>
          </GroupBody>
          <GroupLabel><span /><Launcher /></GroupLabel>
        </Group>
        <Group $w={163}>
          <GroupBody>
            <Line>
              <Cluster><IconButton $w={22}><AlignIcon rows={[2, 6, 10]} step={0} /></IconButton><IconButton $w={22} $on><AlignIcon rows={[4, 8, 12]} step={0} /></IconButton><IconButton $w={22}><AlignIcon rows={[6, 10, 14]} step={0} /></IconButton></Cluster>
              <Cluster><IconButton $w={28}><svg width="16" height="16"><path d="M1 12L12 1M4 15L15 4M2 4l6 8M6 2l5 8" stroke="#333" strokeWidth="1.5" /></svg><Caret $color={blue} /></IconButton></Cluster>
              <Spring />
              <IconButton $w={22} $on><svg width="16" height="18"><path d="M1 3h12M1 7h8M3 12h7M3 16h7M14 7v6h-3" fill="none" stroke="#333" strokeWidth="2" /></svg></IconButton>
              <span /><span />
            </Line>
            <Line>
              <Cluster><IconButton $w={22} $on><AlignIcon rows={[2, 5, 8, 11, 14]} x={1} step={0} /></IconButton><IconButton $w={22}><AlignIcon rows={[2, 5, 8, 11, 14]} x={1} /></IconButton><IconButton $w={22}><AlignIcon rows={[2, 5, 8, 11, 14]} x={1} step={4} /></IconButton></Cluster>
              <Cluster><IconButton $w={21}><IndentIcon out /></IconButton><IconButton $w={21}><IndentIcon /></IconButton></Cluster>
              <Spring />
              <IconButton $w={31} $on><svg width="18" height="16"><rect x="1" y="1" width="15" height="13" fill="#fff" stroke="#4a6ca8" /><path d="M1 5h15M1 10h15M8 1v4M8 10v4" stroke="#4a6ca8" /><path d="M4 8h9" stroke="#222" strokeWidth="2" /></svg><Caret $color={blue} /></IconButton>
            </Line>
          </GroupBody>
          <GroupLabel><span>对齐方式</span><Launcher /></GroupLabel>
        </Group>
        <Group $w={134}>
          <GroupBody>
            <Line><Combo $w={128}><select aria-label="数字格式"><option>常规</option></select><Caret $color={blue} /></Combo></Line>
            <Line>
              <Cluster><IconButton $w={31}><svg width="17" height="18"><rect x="1" y="2" width="14" height="8" fill="#5c8ad0" stroke="#27457c" /><circle cx="8" cy="6" r="2" fill="#fff" /><path d="M8 12h7M7 15h7" stroke="#e3ac2c" strokeWidth="3" /></svg><Caret $color={blue} /></IconButton><IconButton $w={23}>%</IconButton><IconButton $w={23}>,</IconButton></Cluster>
              <Cluster>
                {[0, 1].map(i => (
                  <IconButton key={i} $w={20}><svg width="17" height="18"><path d={i ? 'M1 13h6m-2-3l3 3-3 3' : 'M8 5H2m2-3L1 5l3 3'} fill="none" stroke="#2c62c0" strokeWidth="1.5" /><ellipse cx="13" cy={i ? 13 : 5} rx="2" ry="3" fill="none" stroke="#222" /><ellipse cx={i ? 8 : 9} cy={i ? 5 : 13} rx="2" ry="3" fill="none" stroke="#222" /><ellipse cx={i ? 13 : 14} cy={i ? 5 : 13} rx="2" ry="3" fill="none" stroke="#222" /></svg></IconButton>
                ))}
              </Cluster>
            </Line>
          </GroupBody>
          <GroupLabel><span>数字</span><Launcher /></GroupLabel>
        </Group>
        <Group $w={114}>
          <GroupBody $row><RibbonList>
            <RibbonItem><SmallGrid a="#d8483a" b="#dfe6f2" />条件格式<Caret $color={blue} /></RibbonItem>
            <RibbonItem><SmallGrid a="#7fa5dc" b="#5d86c8" />套用表格格式<Caret $color={blue} /></RibbonItem>
            <RibbonItem><SmallGrid a="#fff" b="#5d86c8" />单元格样式<Caret $color={blue} /></RibbonItem>
          </RibbonList></GroupBody>
          <GroupLabel>样式</GroupLabel>
        </Group>
        <Group $w={66}>
          <GroupBody $row><RibbonList>
            {['插入', '删除', '格式'].map((t, i) => (
              <RibbonItem key={t}>
                <svg width="16" height="16"><path d="M1 1h5v4H1zM1 10h5v4H1z" fill="#fff" stroke="#667" /><path d={i === 0 ? 'M7 7h3M11 5h4v4h-4z' : i === 1 ? 'M1 6h6v3H1z' : 'M4 3h9v9H4zM4 7h9M8 3v9'} fill="none" stroke="#3e64a8" />{i === 1 && <path d="M8 2l7 8M15 2l-7 8" stroke="#d6281e" strokeWidth="2" />}</svg>
                {t}<Caret $color={blue} />
              </RibbonItem>
            ))}
          </RibbonList></GroupBody>
          <GroupLabel>单元格</GroupLabel>
        </Group>
        <Group $w={122}>
          <GroupBody $row>
            <RibbonList>
              <RibbonItem aria-label="求和"><svg width="16" height="16"><path d="M13 3H4l5 5-5 5h9" fill="none" stroke="#111" strokeWidth="2" /></svg><Caret $color={blue} /></RibbonItem>
              <RibbonItem aria-label="填充"><svg width="16" height="16"><rect x="2" y="1" width="12" height="13" fill="#eaf2fd" stroke="#4a6ca8" /><path d="M8 3v5M5 7l3 4 3-4z" stroke="#2d62c8" strokeWidth="2" fill="#2d62c8" /></svg><Caret $color={blue} /></RibbonItem>
              <RibbonItem aria-label="清除"><svg width="16" height="16"><path d="M2 11l7-8 5 2-7 8H3z" fill="#fff" stroke="#556" /></svg><Caret $color={blue} /></RibbonItem>
            </RibbonList>
            <BigButton><SortIcon />排序和<em>筛选<Caret $color={blue} /></em></BigButton>
            <BigButton><BinocularIcon />查找和<em>选择<Caret $color={blue} /></em></BigButton>
          </GroupBody>
          <GroupLabel>编辑</GroupLabel>
        </Group>
      </RibbonStrip>
      <MessageRow><div><button>选项...</button></div><button aria-label="关闭消息"><svg width="9" height="10"><path d="M1 1l7 8M8 1L1 9" stroke="#5a6f94" strokeWidth="2" /></svg></button></MessageRow>
      <FormulaRow>
        <input aria-label="编辑栏" defaultValue="24mil的孔为压接孔，成品孔径按照0.6mm+/-0.05mm控制，压接孔孔铜1-2mil" />
        <button aria-label="展开编辑栏"><svg width="14" height="14"><path d="M4 2l3 3 3-3M4 7l3 3 3-3" fill="none" stroke="#111" strokeWidth="2" /></svg></button>
      </FormulaRow>
      <SheetArea>
        <SheetClip>
          <Sheet>
            <colgroup>{sheetCols.map((c, i) => <col key={i} style={{ width: c[1] }} />)}</colgroup>
            <thead><tr>{sheetCols.map((c, i) => <th key={i} className={i < 7 ? 'sel' : undefined}>{c[0]}</th>)}</tr></thead>
            <tbody>
              {[34, 34, 34].map((h, i) => (
                <Row key={i} $h={h}><td colSpan={5} /><td colSpan={2} /><td /><td className="free" /><td className="free" /></Row>
              ))}
              {sheetNotes.map(([h, text, link], i) => (
                <Row key={i} $h={h}>
                  <td colSpan={7} className={i === 5 ? 'note active' : 'note'}>{text}</td>
                  <td>{link && <a href="#fig">{link}</a>}</td>
                  <td className="free" /><td className="free" />
                </Row>
              ))}
            </tbody>
          </Sheet>
        </SheetClip>
        <SheetBar><SheetSplit /><Caret $dir="up" $size={4} $color="#2c4a80" /><VThumb $h={226} $gap={25} /></SheetBar>
      </SheetArea>
    </ExcelWindow>
  );
}

export default function App() {
  return (
    <Desktop>
      <GlobalStyle />
      <DesktopIcons>
        <DesktopIcon href="#cad"><svg width="48" height="48"><rect width="48" height="48" fill="#e79aa4" /></svg>{'  CAD\n看图简...'}</DesktopIcon>
        <DesktopIcon href="#sun"><SunIcon />向日葵</DesktopIcon>
        <DesktopIcon href="#acrobat"><AcrobatIcon />{'Adobe\nAcrobat'}</DesktopIcon>
        <DesktopIcon href="#v95"><svg width="48" height="48"><circle cx="32" cy="24" r="12" fill="#c8b860" /></svg>{'      Pro 9.5'}</DesktopIcon>
        <DesktopIcon href="#exam"><ExamIcon />在线考试系统</DesktopIcon>
        <DesktopIcon href="#drill"><PptIcon />背钻.ppt</DesktopIcon>
        <DesktopIcon href="#tool"><svg width="48" height="48"><circle cx="30" cy="24" r="22" fill="#4a8a90" stroke="#ccd" strokeWidth="3" /></svg></DesktopIcon>
        <DesktopIcon href="#foxmail"><RedG /></DesktopIcon>
        <DesktopIcon href="#eds"><GreenF /></DesktopIcon>
      </DesktopIcons>
      <Ems />
      <Excel />
      <LangBar>
        <i />EN
        <svg width="16" height="16" viewBox="0 0 16 16"><circle cx="8" cy="8" r="7" fill="#1c2cc0" stroke="#b9c2e8" /><path d="M6 6c0-3 5-2 4 0-1 1-2 1-2 3m0 1v2" fill="none" stroke="#fff" strokeWidth="1.5" /></svg>
        <LangMenu aria-label="选项"><Caret $color="#fff" /></LangMenu>
      </LangBar>
      <Pointers width="100%" height="100%">
        <g fill="#00ff00" stroke="#00ff00" strokeLinejoin="round">
          <path d="M1302 286L1361 375" strokeWidth="5" strokeLinecap="round" />
          <path d="M1372 390l-20-18 13-8z" strokeWidth="3" />
          <path d="M456 910L402 838" strokeWidth="4" strokeLinecap="round" />
          <path d="M391 820l9 25 12-8z" strokeWidth="3" />
        </g>
      </Pointers>
      <TaskBar>
        {tasks.map(([kind, label, w, tone, joined], i) => (
          <Task key={i} $w={w} $tone={tone} $joined={joined} aria-label={label || '任务'}>{kind && <TaskIcon kind={kind} />}{label}</Task>
        ))}
        <Tray>
          <Caret $dir="up" $size={4} $color="#fff" />
          <svg width="16" height="20"><path d="M2 1v17M3 2l6 1 5-1v8l-5 1-6-1z" fill="#fff" stroke="#fff" /><circle cx="11" cy="14" r="5" fill="#d8281e" /><path d="M9 12l4 4M13 12l-4 4" stroke="#fff" strokeWidth="1.5" /></svg>
          <time>13:57<br />2020/8/3</time>
          <i />
        </Tray>
      </TaskBar>
    </Desktop>
  );
}
